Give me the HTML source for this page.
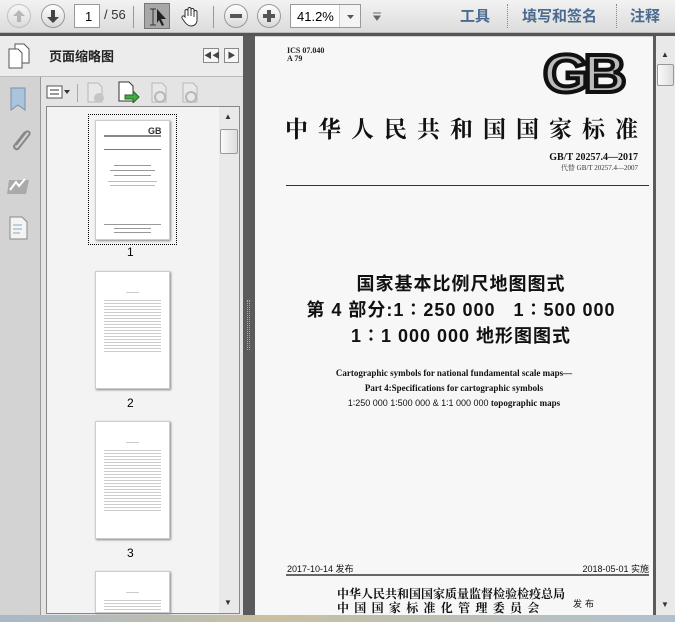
<!DOCTYPE html>
<html><head><meta charset="utf-8"><style>
*{margin:0;padding:0;box-sizing:border-box}
body{width:675px;height:622px;overflow:hidden;background:#d0d0d0;font-family:"Liberation Sans","Noto Sans CJK SC",sans-serif;position:relative}
.a{position:absolute}
.tb{left:0;top:0;width:675px;height:33px;background:linear-gradient(#f2f2f2,#dcdcdc);border-bottom:1px solid #bbb}
.circ{width:24px;height:24px;border-radius:50%;border:1px solid #999;background:linear-gradient(#fff,#d8d8d8);top:4px}
.sep{width:1px;height:22px;background:#999;top:6px}
.cn{font-family:"Noto Sans CJK SC",sans-serif}
.th{left:95px;width:75px;background:#fff;border:1px solid #ccc;box-shadow:1px 1px 2px #888}
.ln{position:absolute;left:8px;right:8px;height:1px;background:#ccc}
.serif{font-family:"Liberation Serif","Noto Serif CJK SC",serif}
</style></head><body>
<div class="a tb"></div>
<div class="a circ" style="left:7px;opacity:.5"><svg width="22" height="22"><path d="M11 5l6 6h-4v6h-4v-6H5z" fill="#888"/></svg></div>
<div class="a circ" style="left:41px"><svg width="22" height="22"><path d="M11 18l6-6h-4V5h-4v7H5z" fill="#444"/></svg></div>
<div class="a" style="left:74px;top:4px;width:26px;height:24px;background:#fff;border:1px solid #999;font-size:13px;padding:4px 0 0 10px">1</div>
<div class="a" style="left:104px;top:7px;font-size:13px;color:#333">/ 56</div>
<div class="a sep" style="left:133px"></div>
<div class="a" style="left:144px;top:3px;width:26px;height:26px;background:#a8a8a8;border:1px solid #777"><svg width="26" height="26"><path d="M5 5h6M5 21h6M8 5v16" stroke="#333" fill="none"/><path d="M12 5l9 10h-5l3 6-2 1-3-6-2 3z" fill="#222"/></svg></div>
<div class="a" style="left:178px;top:4px"><svg width="24" height="24"><path d="M7 13V7a1.5 1.5 0 013 0v5V5a1.5 1.5 0 013 0v7V6a1.5 1.5 0 013 0v7V8a1.5 1.5 0 013 0v8c0 4-3 6-6 6s-5-2-7-5l-2-3a1.5 1.5 0 012-2z" fill="#fff" stroke="#333"/></svg></div>
<div class="a sep" style="left:213px"></div>
<div class="a circ" style="left:224px"><svg width="22" height="22"><rect x="5" y="9" width="12" height="4" fill="#555"/></svg></div>
<div class="a circ" style="left:257px"><svg width="22" height="22"><path d="M5 9h4V5h4v4h4v4h-4v4H9v-4H5z" fill="#555"/></svg></div>
<div class="a" style="left:290px;top:4px;width:71px;height:24px;background:#fff;border:1px solid #999;font-size:13px;padding:4px 0 0 6px">41.2%</div>
<div class="a" style="left:339px;top:5px;width:21px;height:22px;border-left:1px solid #ccc;background:#f4f4f4"><svg width="21" height="22"><path d="M7 10h7l-3.5 4z" fill="#555"/></svg></div>
<div class="a" style="left:371px;top:9px"><svg width="12" height="12"><path d="M2 3h8M3 6h6l-3 4z" stroke="#666" fill="#666"/></svg></div>
<div class="a cn" style="left:460px;top:5px;font-size:15px;color:#4a6a90;font-weight:bold">工具</div>
<div class="a" style="left:507px;top:4px;border-left:1px dotted #888;height:24px"></div>
<div class="a cn" style="left:522px;top:5px;font-size:15px;color:#4a6a90;font-weight:bold">填写和签名</div>
<div class="a" style="left:616px;top:4px;border-left:1px dotted #888;height:24px"></div>
<div class="a cn" style="left:630px;top:5px;font-size:15px;color:#4a6a90;font-weight:bold">注释</div>
<div class="a" style="left:0;top:33px;width:675px;height:3px;background:#555"></div>

<div class="a" style="left:0;top:36px;width:41px;height:579px;background:#d3d3d3;border-right:1px solid #999"></div>
<div class="a" style="left:41px;top:36px;width:202px;height:579px;background:#e4e4e4"></div>
<div class="a" style="left:0;top:36px;width:243px;height:41px;background:#ececec;border-bottom:1px solid #bbb"></div>
<div class="a" style="left:8px;top:43px"><svg width="22" height="26"><path d="M7 1h9l5 5v14H7z" fill="#fff" stroke="#555"/><path d="M1 6h9l4 4v15H1z" fill="#fff" stroke="#555"/></svg></div>
<div class="a cn" style="left:49px;top:46px;font-size:13px;font-weight:bold;color:#222">页面缩略图</div>
<div class="a" style="left:203px;top:48px;width:16px;height:15px;border:1px solid #888;background:#f6f6f6;font-size:8px;text-align:center;line-height:13px;color:#444">◀◀</div>
<div class="a" style="left:224px;top:48px;width:15px;height:15px;border:1px solid #888;background:#f6f6f6;font-size:8px;text-align:center;line-height:13px;color:#444">▶</div>
<div class="a" style="left:8px;top:86px"><svg width="20" height="26"><path d="M3 2h14v22l-7-5-7 5z" fill="#a9c4dc" stroke="#7a90a8"/></svg></div>
<div class="a" style="left:7px;top:128px"><svg width="24" height="26"><path d="M18 4L7 18a3 3 0 004 3l11-14a2 2 0 00-3-3L9 17" fill="none" stroke="#888" stroke-width="2"/></svg></div>
<div class="a" style="left:6px;top:175px"><svg width="26" height="22"><path d="M3 5h20l-3 14H1z" fill="#aaa"/><path d="M4 15l6-8 3 4 6-7" stroke="#fff" stroke-width="2" fill="none"/></svg></div>
<div class="a" style="left:9px;top:216px"><svg width="20" height="24"><path d="M1 1h12l5 5v17H1z" fill="#f4f4f4" stroke="#888"/><path d="M4 9h9M4 13h9M4 17h7" stroke="#8ab"/></svg></div>
<div class="a" style="left:46px;top:84px;font-size:12px"><svg width="26" height="16"><rect x="1" y="2" width="15" height="12" fill="#fff" stroke="#555"/><path d="M4 6h9M4 10h9" stroke="#333"/><path d="M18 6h6l-3 4z" fill="#333"/></svg></div>
<div class="a" style="left:77px;top:84px;width:1px;height:18px;background:#aaa"></div>
<div class="a" style="left:86px;top:82px;opacity:.4"><svg width="20" height="22"><path d="M2 1h10l4 4v15H2z" fill="#eee" stroke="#777"/><circle cx="13" cy="16" r="5" fill="#999"/></svg></div>
<div class="a" style="left:117px;top:81px"><svg width="24" height="22"><path d="M2 1h10l4 4v15H2z" fill="#fff" stroke="#333"/><path d="M8 14h8v-4l6 6-6 6v-4H8z" fill="#4a4" stroke="#262"/></svg></div>
<div class="a" style="left:150px;top:82px;opacity:.4"><svg width="20" height="22"><path d="M2 1h10l4 4v15H2z" fill="#eee" stroke="#777"/><circle cx="10" cy="15" r="5" fill="none" stroke="#777" stroke-width="2"/></svg></div>
<div class="a" style="left:181px;top:82px;opacity:.4"><svg width="20" height="22"><path d="M2 1h10l4 4v15H2z" fill="#eee" stroke="#777"/><circle cx="10" cy="15" r="5" fill="none" stroke="#777" stroke-width="2"/></svg></div>
<div class="a" style="left:46px;top:106px;width:194px;height:508px;background:#f3f3f3;border:1px solid #888"></div>
<div class="a" style="left:219px;top:107px;width:20px;height:506px;background:#e9e9e9"></div>
<div class="a" style="left:224px;top:112px;font-size:8px;color:#333">▲</div>
<div class="a" style="left:220px;top:129px;width:18px;height:25px;border:1px solid #999;border-radius:2px;background:linear-gradient(90deg,#fafafa,#ddd)"></div>
<div class="a" style="left:224px;top:598px;font-size:8px;color:#333">▼</div>

<div class="a" style="left:88px;top:114px;width:89px;height:131px;border:1px dotted #000"></div>
<div class="a th" style="top:120px;height:120px">
 <div class="a" style="left:52px;top:5px;font-size:9px;font-weight:bold;color:#333">GB</div>
 <div class="ln" style="top:14px;height:2px;background:#888"></div>
 <div class="ln" style="top:28px;background:#777"></div>
 <div class="ln" style="top:44px;left:18px;right:18px;background:#999"></div>
 <div class="ln" style="top:49px;left:14px;right:14px;background:#999"></div>
 <div class="ln" style="top:54px;left:18px;right:18px;background:#999"></div>
 <div class="ln" style="top:60px;left:12px;right:12px;background:#bbb"></div>
 <div class="ln" style="top:64px;left:14px;right:14px;background:#bbb"></div>
 <div class="ln" style="top:103px;background:#999"></div>
 <div class="ln" style="top:107px;left:18px;right:18px;background:#999"></div>
 <div class="ln" style="top:111px;left:18px;right:18px;background:#999"></div>
</div>
<div class="a" style="left:127px;top:245px;font-size:12px">1</div>
<div class="a th" style="top:271px;height:118px">
 <div class="ln" style="top:20px;left:30px;right:30px"></div>
 <div class="ln" style="top:28px;height:52px;background:repeating-linear-gradient(#ccc 0 1px,transparent 1px 3px)"></div>
</div>
<div class="a" style="left:127px;top:396px;font-size:12px">2</div>
<div class="a th" style="top:421px;height:118px">
 <div class="ln" style="top:20px;left:30px;right:30px"></div>
 <div class="ln" style="top:28px;height:62px;background:repeating-linear-gradient(#ccc 0 1px,transparent 1px 3px)"></div>
</div>
<div class="a" style="left:127px;top:546px;font-size:12px">3</div>
<div class="a th" style="top:571px;height:42px">
 <div class="ln" style="top:20px;left:30px;right:30px"></div>
 <div class="ln" style="top:28px;height:14px;background:repeating-linear-gradient(#ccc 0 1px,transparent 1px 3px)"></div>
</div>

<div class="a" style="left:243px;top:36px;width:12px;height:579px;background:#5b5b5b"></div>
<div class="a" style="left:247px;top:300px;width:3px;height:50px;border-left:1px dotted #aaa;border-right:1px dotted #aaa"></div>
<div class="a" style="left:255px;top:37px;width:398px;height:578px;background:#f7f7f7"></div>
<div class="a" style="left:653px;top:36px;width:3px;height:579px;background:#5b5b5b"></div>
<div class="a" style="left:656px;top:36px;width:19px;height:579px;background:#e9e9e9"></div>
<div class="a" style="left:661px;top:50px;font-size:8px;color:#333">▲</div>
<div class="a" style="left:657px;top:64px;width:17px;height:22px;border:1px solid #999;border-radius:2px;background:linear-gradient(90deg,#fafafa,#ddd)"></div>
<div class="a" style="left:661px;top:600px;font-size:8px;color:#333">▼</div>
<div class="a" style="left:0;top:615px;width:675px;height:7px;background:linear-gradient(90deg,#a8b8c8,#c8c0a0 40%,#b0c0d0)"></div>

<div class="a serif" style="left:287px;top:47px;font-size:8px;line-height:8px;color:#222;font-weight:bold">ICS 07.040<br>A 79</div>
<div class="a" style="left:536px;top:50px;width:92px;height:48px;font-family:'Liberation Sans';font-weight:bold;font-size:54px;line-height:48px;color:#bbb;-webkit-text-stroke:4px #111;letter-spacing:-5px;text-align:center;transform:scaleX(1.1)">GB</div>
<div class="a serif" style="left:285px;top:111px;font-size:23px;font-weight:bold;letter-spacing:10px;color:#111;white-space:nowrap">中华人民共和国国家标准</div>
<div class="a serif" style="left:520px;top:152px;width:118px;text-align:right;font-size:10px;font-weight:bold;color:#111">GB/T 20257.4—2017</div>
<div class="a serif" style="left:520px;top:163px;width:118px;text-align:right;font-size:7px;color:#333">代替 GB/T 20257.4—2007</div>
<div class="a" style="left:286px;top:185px;width:363px;height:1px;background:#333"></div>
<div class="a" style="left:255px;top:271px;width:412px;text-align:center;font-size:18px;font-weight:bold;line-height:26px;color:#111;letter-spacing:1px">国家基本比例尺地图图式<br>第 4 部分:1∶250 000&nbsp;&nbsp;&nbsp;1∶500 000<br>1∶1 000 000 地形图图式</div>
<div class="a serif" style="left:255px;top:366px;width:398px;text-align:center;font-size:9px;line-height:15px;font-weight:bold;color:#111">Cartographic symbols for national fundamental scale maps—<br>Part 4:Specifications for cartographic symbols<br><span style="font-weight:normal;font-family:'Liberation Sans'">1∶250 000 1∶500 000 &amp; 1∶1 000 000</span> topographic maps</div>
<div class="a" style="left:287px;top:562px;font-size:9px;color:#111">2017-10-14 发布</div>
<div class="a" style="left:560px;top:562px;width:89px;text-align:right;font-size:9px;color:#111">2018-05-01 实施</div>
<div class="a" style="left:286px;top:574px;width:363px;height:2px;background:#666"></div>
<div class="a serif" style="left:337px;top:587px;font-size:12px;line-height:14px;font-weight:bold;color:#111;white-space:nowrap">中华人民共和国国家质量监督检验检疫总局<br><span style="letter-spacing:5.3px">中国国家标准化管理委员会</span></div>
<div class="a" style="left:573px;top:597px;font-size:9px;color:#111;letter-spacing:3px">发布</div>
</body></html>
